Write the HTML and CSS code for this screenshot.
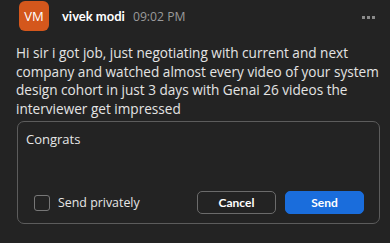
FILE: index.html
```html
<!DOCTYPE html>
<html>
<head>
<meta charset="utf-8">
<link rel="stylesheet" href="styles.css">
</head>
<body>
<div class="post">
  <div class="header">
    <div class="avatar">VM</div>
    <span class="name">vivek modi</span>
    <span class="time">09:02 PM</span>
    <div class="more"><i></i><i></i><i></i></div>
  </div>
  <p class="message">Hi sir i got job, just negotiating with current and next company and watched almost every video of your system design cohort in just 3 days with Genai 26 videos the interviewer get impressed</p>
  <div class="reply">
    <div class="reply-text">Congrats</div>
    <div class="reply-footer">
      <label class="private"><span class="checkbox"></span>Send privately</label>
      <div class="actions">
        <button class="btn btn-cancel">Cancel</button>
        <button class="btn btn-send">Send</button>
      </div>
    </div>
  </div>
</div>
</body>
</html>
```
FILE: styles.css
```css
html, body {
  margin: 0;
  padding: 0;
  background: #232323;
}
body {
  font-family: "Open Sans", "Noto Sans", sans-serif;
  color: #e6e6e6;
  width: 390px;
  height: 243px;
  overflow: hidden;
}
.post {
  padding: 1px 4px 0 16px;
}
.header {
  display: flex;
  align-items: center;
  height: 30px;
  padding-left: 3px;
  padding-right: 6px;
}
.avatar {
  width: 30px;
  height: 30px;
  border-radius: 6px;
  background: #d4571c;
  color: #fff;
  font-size: 13px;
  display: flex;
  align-items: center;
  justify-content: center;
  margin-right: 13px;
}
.name {
  font-family: "Lato", "Open Sans", sans-serif;
  font-weight: 700;
  font-size: 13px;
  color: #fff;
  margin-right: 8px;
}
.time {
  font-size: 12.2px;
  color: #9a9a9a;
}
.more {
  margin-left: auto;
  display: flex;
  gap: 2px;
  margin-right: 5px;
  margin-top: 2px;
}
.more i {
  width: 3px;
  height: 3px;
  background: #8a8a8a;
}
.message {
  margin: 13px 0 0 0;
  font-size: 13.6px;
  line-height: 18.5px;
  color: #e4e4e4;
}
.reply {
  margin: 3px 6px 0 1px;
  border: 1px solid #5c5c5c;
  border-radius: 7px;
  height: 103px;
  box-sizing: border-box;
  padding: 8px 15px 8px 8px;
  display: flex;
  flex-direction: column;
  justify-content: space-between;
}
.reply-text {
  font-size: 13px;
  color: #e6e6e6;
}
.reply-footer {
  display: flex;
  align-items: center;
  justify-content: space-between;
  padding-left: 8px;
  padding-bottom: 1px;
}
.private {
  display: flex;
  align-items: center;
  font-size: 12.4px;
  color: #e6e6e6;
}
.checkbox {
  width: 14px;
  height: 14px;
  border: 1px solid #777;
  border-radius: 3px;
  margin-right: 8px;
}
.actions {
  display: flex;
  gap: 9px;
}
.btn {
  width: 79px;
  height: 23px;
  border-radius: 5px;
  font-family: "Lato", "Open Sans", sans-serif;
  font-size: 12px;
  font-weight: 700;
  color: #fff;
  padding: 0;
}
.btn-cancel {
  background: #232323;
  border: 1px solid #6b6b6b;
}
.btn-send {
  background: #1a6ddc;
  border: 1px solid #1a6ddc;
}
```
